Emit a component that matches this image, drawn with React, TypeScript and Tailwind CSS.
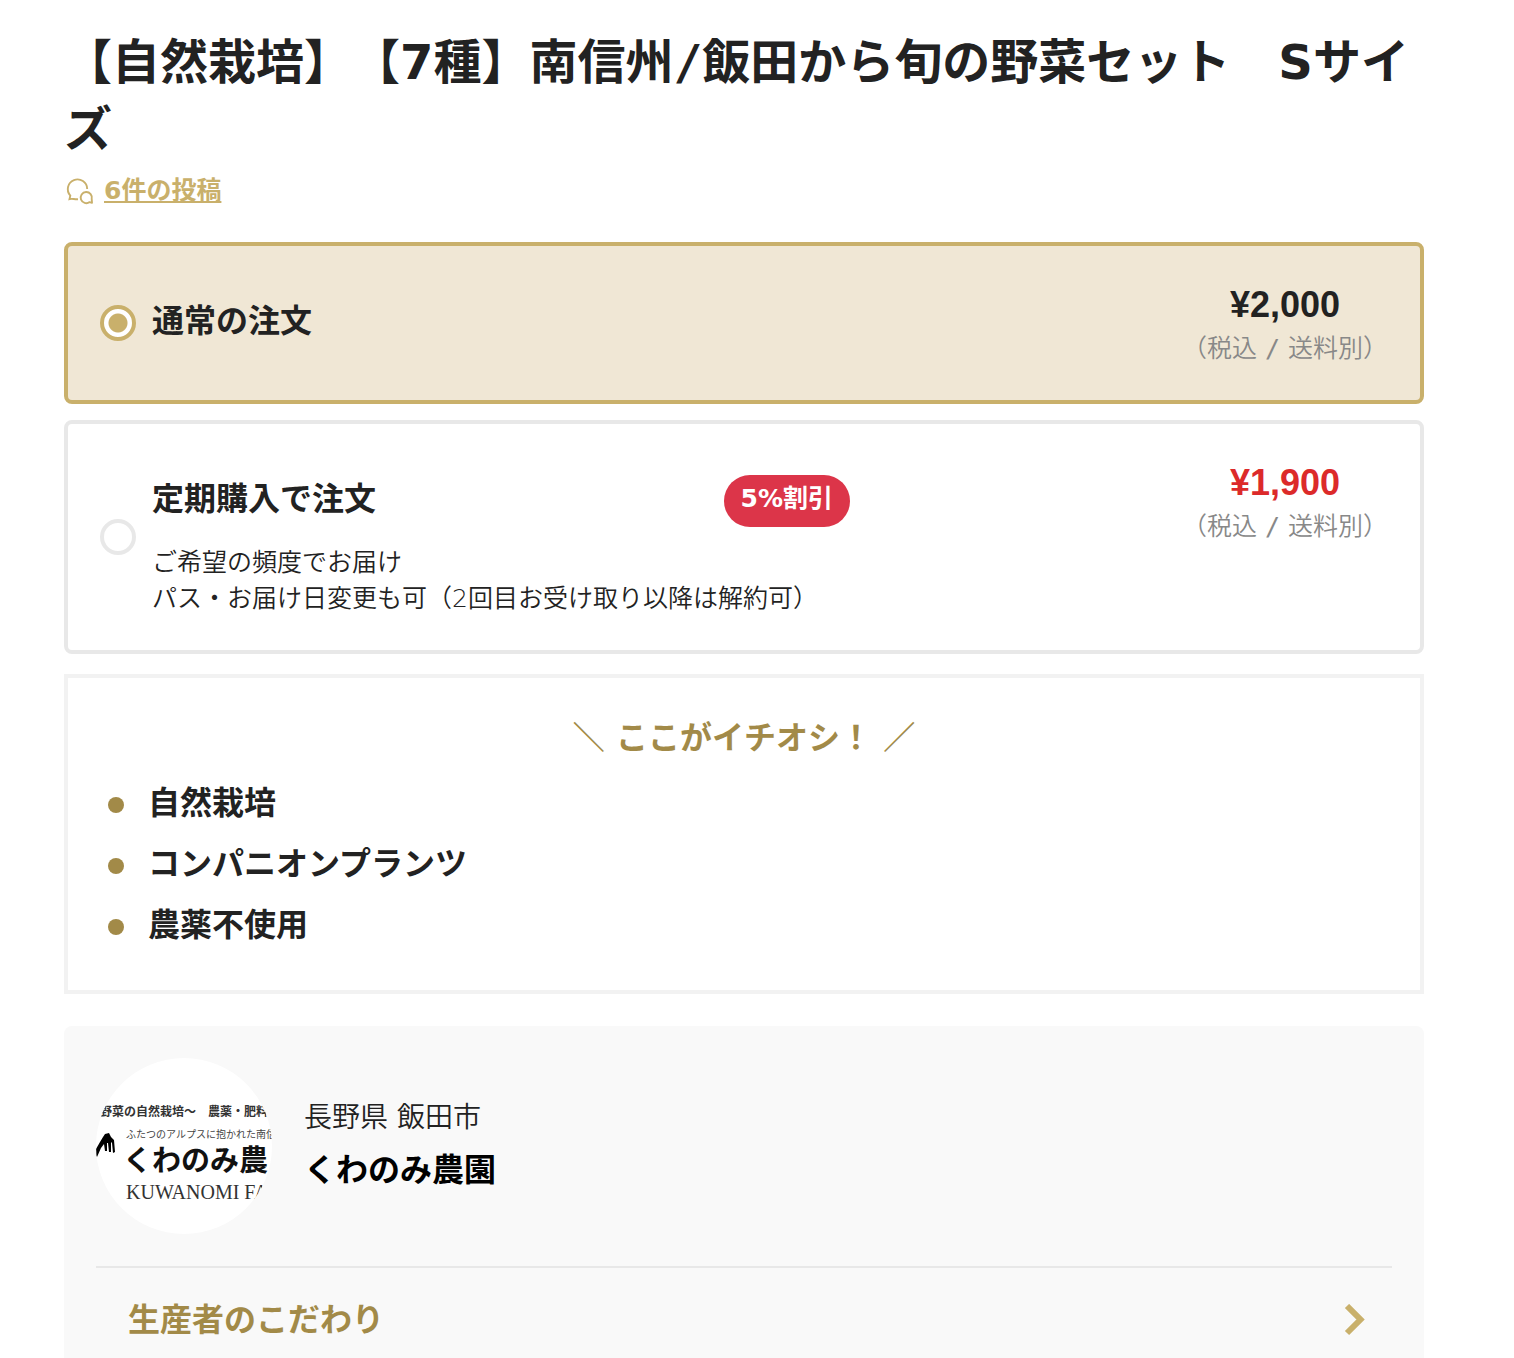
import React from 'react';

const highlights = ['自然栽培', 'コンパニオンプランツ', '農薬不使用'];

const radioClass = "my-auto size-9 shrink-0 appearance-none rounded-full border-4 border-[#e8e8e8] bg-white checked:border-[#c9b06b] checked:bg-[radial-gradient(circle,#c9b06b_9px,#fff_10px)]";

// the slash is set wider than the rest of the text
function Slash() {
    return <span className="font-['DejaVu_Sans_Mono',monospace]">/</span>;
}

function PostsIcon() {
    return (
        <svg className="size-8" viewBox="0 0 32 32" fill="none" stroke="currentColor" strokeWidth="1.9">
            <path d="M23.2 14A9.7 9.7 0 1 0 6.3 20.6L5.5 24.2C8 23.4 10 24.4 14 24.2"/>
            <path d="M25.6 27.1A5.6 5.6 0 1 1 27.7 24L28 27.8Z" strokeLinejoin="round"/>
        </svg>
    );
}

function FarmLogo() {
    return (
        <svg className="size-44 shrink-0 rounded-full bg-white font-['Noto_Sans_CJK_JP',sans-serif]" viewBox="0 0 176 176" role="img" aria-label="くわのみ農園">
            <text x="4" y="58" fontSize="12" fontWeight="700" fill="#333">野菜の自然栽培～　農薬・肥料不</text>
            <text x="30" y="80" fontSize="10" fill="#444">ふたつのアルプスに抱かれた南信</text>
            <path d="M0 91L4 84L7 79L9 76L13 75L15 79L18 82L19 94L17 95L16 85L15 84V94L13 94L12 85L11 85V93L9 93L8 86L5 90L1 99L0 98Z" fill="#000"/>
            <text x="27" y="113" fontSize="29" fontWeight="700" fill="#111">くわのみ農</text>
            <text x="30" y="141" fontSize="20" fill="#333" className="font-['Liberation_Serif',serif]">KUWANOMI FA</text>
        </svg>
    );
}

function Price({value, sale}: { value: string, sale?: boolean }) {
    return (
        <div className="ml-auto shrink-0 pt-[37px] pb-[29px] text-center">
            <p className={"text-4xl leading-11 font-bold font-['Liberation_Sans',sans-serif] " + (sale ? "text-[#dc2a2a]" : "")}>{value}</p>
            <p className="text-[25px] leading-11 font-[350] text-[#888]">（税込 <Slash/> 送料別）</p>
        </div>
    );
}

function App() {
    const [plan, setPlan] = React.useState('normal');

    function cardClass(active: boolean) {
        return "flex rounded-lg border-4 px-8 " + (active ? "border-[#c9b06b] bg-[#f0e7d5]" : "border-[#e8e8e8] bg-white");
    }

    return (
        <main className="bg-white pt-[29px] pr-[90px] pl-16 font-['DejaVu_Sans','Noto_Sans_CJK_JP',sans-serif] text-[#222] [text-spacing-trim:space-all]">
            <h1 className="text-5xl leading-[67px] font-bold">【自然栽培】【7種】南信州<Slash/>飯田から旬の野菜セット　Sサイズ</h1>
            <a href="#posts" className="mt-[10px] flex items-center gap-2 text-[25px] leading-9 font-bold text-[#c9b06b]">
                <PostsIcon/>
                <span className="underline decoration-2 underline-offset-2">6件の投稿</span>
            </a>

            <div className="mt-[33px] flex flex-col gap-4">
                <label className={cardClass(plan === 'normal')}>
                    <input type="radio" name="plan" className={radioClass} checked={plan === 'normal'}
                           onChange={() => setPlan('normal')}/>
                    <span className="my-auto ml-4 pb-1 text-[32px] leading-12 font-bold">通常の注文</span>
                    <Price value="¥2,000"/>
                </label>
                <label className={cardClass(plan === 'subscription')}>
                    <input type="radio" name="plan" className={radioClass} checked={plan === 'subscription'}
                           onChange={() => setPlan('subscription')}/>
                    <div className="ml-4 w-full max-w-[698px] pt-[51px] pb-[33px]">
                        <div className="flex items-start justify-between">
                            <span className="text-[32px] leading-12 font-bold">定期購入で注文</span>
                            <span className="rounded-full bg-[#dc3549] px-[17px] pb-1 text-[25px] leading-12 font-bold text-white">5%割引</span>
                        </div>
                        <p className="mt-[18px] text-[25px] leading-9 font-[350]">
                            ご希望の頻度でお届け<br/>
                            パス・お届け日変更も可（2回目お受け取り以降は解約可）
                        </p>
                    </div>
                    <Price value="¥1,900" sale/>
                </label>
            </div>

            <section className="mt-5 border-4 border-[#f2f2f2] px-10 pt-9 pb-[42px]">
                <h2 className="text-center text-[32px] leading-12 font-bold text-[#a28a48]">＼ ここがイチオシ！ ／</h2>
                <ul className="mt-[19px] flex flex-col gap-4">
                    {highlights.map((val, idx) =>
                        <li key={idx} className="flex items-center gap-6 text-[32px] leading-[45px] font-bold">
                            <span className="mt-[2px] size-4 rounded-full bg-[#a28a48]"/>
                            {val}
                        </li>
                    )}
                </ul>
            </section>

            <section className="mt-8 rounded-t-lg bg-[#f9f9f9] px-8 pt-8">
                <div className="flex gap-8 pb-8">
                    <FarmLogo/>
                    <div className="pt-9">
                        <p className="text-[28px] leading-12 font-[350]">長野県 飯田市</p>
                        <p className="mt-1 text-[32px] leading-12 font-bold text-black">くわのみ農園</p>
                    </div>
                </div>
                <a href="#producer" className="flex items-center justify-between border-t-2 border-[#e8e8e8] pt-7 pr-6 pb-[14px] pl-8 text-[32px] leading-12 font-bold text-[#a28a48]">
                    生産者のこだわり
                    <svg className="h-8 w-6 text-[#c9b06b]" viewBox="0 0 24 32" fill="none" stroke="currentColor" strokeWidth="6">
                        <path d="M3 2L16.5 15.5L3 29"/>
                    </svg>
                </a>
            </section>
        </main>
    );
}

export default App;
